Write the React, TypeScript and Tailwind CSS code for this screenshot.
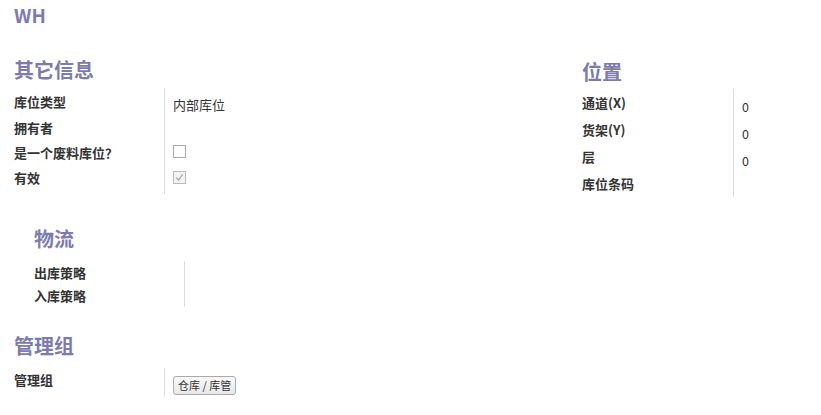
export default function App() {
  const font = { fontFamily: '"Noto Sans CJK SC", "Liberation Sans", sans-serif' };
  return (
    <div className="w-[821px] h-[415px] bg-white text-[#333] overflow-hidden" style={font}>
      <div className="px-[14px] pt-[3px]">
        <div className="text-[19px] font-bold text-[#7c7bad] leading-[24px]">WH</div>

        <div className="flex mt-[29px]">
          {/* 其它信息 */}
          <div className="w-[568px]">
            <h2 className="text-[20px] font-bold text-[#7c7bad] leading-[28px]">其它信息</h2>
            <div className="mt-[4px] flex">
              <div className="w-[150px] flex flex-col text-[13px] font-bold pt-[1px]">
                <div className="h-[26px] leading-[26px]">库位类型</div>
                <div className="h-[25px] leading-[26px]">拥有者</div>
                <div className="h-[25px] leading-[26px]">是一个废料库位？</div>
                <div className="h-[26px] leading-[26px]">有效</div>
              </div>
              <div className="border-l border-[#ddd] pl-[8px] w-[200px] flex flex-col text-[13px] pt-[4px] pb-[4px]">
                <div className="h-[26px] leading-[26px]">内部库位</div>
                <div className="h-[20px]"></div>
                <div className="h-[26px] flex items-center">
                  <span className="w-[13px] h-[13px] border border-[#aaa] bg-white inline-block"></span>
                </div>
                <div className="h-[26px] flex items-center">
                  <span className="w-[13px] h-[13px] border border-[#bbb] bg-[#f3f3f3] inline-flex items-center justify-center">
                    <svg width="9" height="9" viewBox="0 0 10 10">
                      <path d="M1.5 5 L4 8 L8.5 1.5" fill="none" stroke="#aaa" strokeWidth="1.4" />
                    </svg>
                  </span>
                </div>
              </div>
            </div>
          </div>

          {/* 位置 */}
          <div className="pt-[2px]">
            <h2 className="text-[20px] font-bold text-[#7c7bad] leading-[28px]">位置</h2>
            <div className="mt-[3px] flex">
              <div className="w-[151px] flex flex-col text-[13px] font-bold">
                <div className="h-[27px] leading-[27px]">通道(X)</div>
                <div className="h-[27px] leading-[27px]">货架(Y)</div>
                <div className="h-[27px] leading-[27px]">层</div>
                <div className="h-[27px] leading-[27px]">库位条码</div>
              </div>
              <div className="border-l border-[#ddd] pl-[8px] w-[60px] flex flex-col text-[12.5px] pt-[4px]">
                <div className="h-[27px] leading-[27px]">0</div>
                <div className="h-[27px] leading-[27px]">0</div>
                <div className="h-[27px] leading-[27px]">0</div>
              </div>
            </div>
          </div>
        </div>

        {/* 物流 */}
        <div className="pl-[20px] mt-[28px]">
          <h2 className="text-[20px] font-bold text-[#7c7bad] leading-[28px]">物流</h2>
          <div className="mt-[8px] flex">
            <div className="w-[150px] flex flex-col text-[13px] font-bold pt-[1px]">
              <div className="h-[22px] leading-[22px]">出库策略</div>
              <div className="h-[23px] leading-[24px]">入库策略</div>
            </div>
            <div className="border-l border-[#ddd] w-[100px]"></div>
          </div>
        </div>

        {/* 管理组 */}
        <div className="mt-[25px]">
          <h2 className="text-[20px] font-bold text-[#7c7bad] leading-[28px]">管理组</h2>
          <div className="mt-[8px] flex">
            <div className="w-[150px] text-[13px] font-bold h-[28px] leading-[24px]">管理组</div>
            <div className="border-l border-[#ddd] pl-[8px] pt-[3px]">
              <span className="inline-block text-[11px] leading-[17px] px-[4px] border border-[#aaa] rounded-[3px] bg-gradient-to-b from-[#fafafa] to-[#e8e8e8]">
                仓库 / 库管
              </span>
            </div>
          </div>
        </div>
      </div>
    </div>
  );
}
